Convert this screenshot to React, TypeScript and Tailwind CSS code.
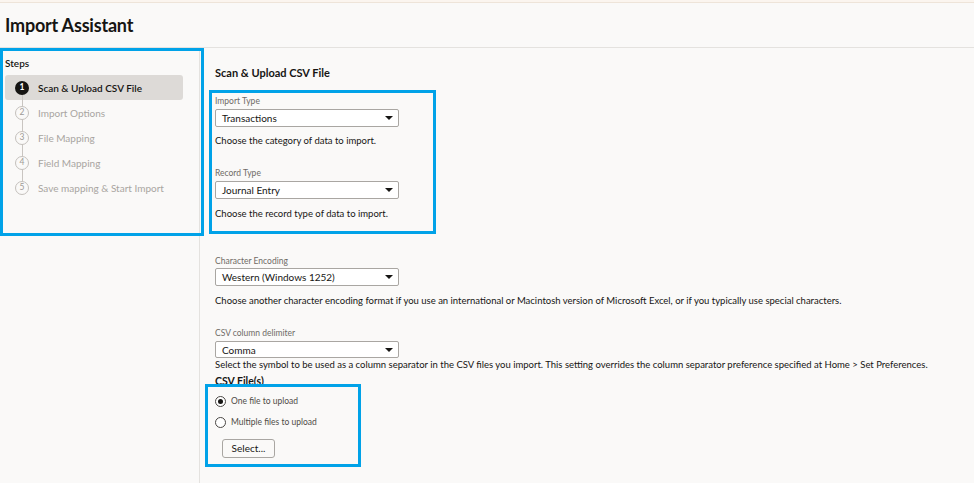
import React from "react";

const steps = [
  "Scan & Upload CSV File",
  "Import Options",
  "File Mapping",
  "Field Mapping",
  "Save mapping & Start Import",
];

function Select({ value, h = "h-[18px]" }: { value: string; h?: string }) {
  return (
    <div
      className={`${h} w-[184px] bg-white border border-[#a9a6a2] rounded-[2px] flex items-center justify-between pl-[6px] pr-[5px]`}
    >
      <span className="text-[10px] leading-none text-[#161513]">{value}</span>
      <span className="w-0 h-0 border-l-[4px] border-r-[4px] border-t-[4px] border-l-transparent border-r-transparent border-t-[#161513]" />
    </div>
  );
}

function Label({ children, className = "" }: { children: React.ReactNode; className?: string }) {
  return <div className={`text-[8.5px] leading-[12px] text-[#6f6b66] ${className}`}>{children}</div>;
}

function Help({ children, className = "" }: { children: React.ReactNode; className?: string }) {
  return <div className={`text-[9.5px] leading-[14px] text-[#161513] ${className}`}>{children}</div>;
}

export default function App() {
  return (
    <div className="w-[974px] h-[483px] overflow-hidden bg-[#faf9f8] text-[#161513] font-['Lato',sans-serif]">
      {/* top strip */}
      <div className="h-[2px] bg-[#fbf5ef]" />
      <div className="h-[1px] bg-[#eee4d9]" />

      {/* header */}
      <div className="h-[45px] flex items-center px-[5px] border-b border-[#e4e2df]">
        <h1 className="text-[18px] font-bold tracking-[-0.2px]">Import Assistant</h1>
      </div>

      <div className="flex h-[436px]">
        {/* sidebar */}
        <div className="relative w-[200px] border-r border-[#e4e2df] pl-[5px]">
          <div className="pt-[9px] text-[10px] leading-[12px] font-semibold">Steps</div>
          <div className="mt-[6px] w-[178px]">
            {steps.map((s, i) => {
              const active = i === 0;
              return (
                <div
                  key={s}
                  className={`relative h-[25px] flex items-center rounded-[3px] ${active ? "bg-[#dddad7]" : ""}`}
                >
                  {i < steps.length - 1 && (
                    <span className="absolute left-[17px] top-[19px] h-[13px] w-px bg-[#c9c5c1]" />
                  )}
                  <span
                    className={`relative ml-[10px] w-[14px] h-[14px] rounded-full flex items-center justify-center text-[8.5px] leading-none ${
                      active
                        ? "bg-[#161513] text-white font-bold"
                        : "bg-[#faf9f8] border border-[#c4c0bc] text-[#9e9a96]"
                    }`}
                  >
                    {i + 1}
                  </span>
                  <span
                    className={`ml-[9px] text-[10px] leading-none ${
                      active ? "font-semibold text-[#161513]" : "text-[#a9a5a1]"
                    }`}
                  >
                    {s}
                  </span>
                </div>
              );
            })}
          </div>
          {/* annotation */}
          <div className="absolute left-0 top-0 w-[204px] h-[188px] border-[3px] border-[#00a2e8] pointer-events-none" />
        </div>

        {/* main */}
        <div className="flex-1 pl-[15px]">
          <div className="mt-[18px] text-[11px] leading-[14px] font-bold">Scan &amp; Upload CSV File</div>

          <div className="relative mt-[10px] pt-[5px] pb-[13px]">
            <Label>Import Type</Label>
            <div className="mt-[2px]">
              <Select value="Transactions" />
            </div>
            <Help className="mt-[7px]">Choose the category of data to import.</Help>
            <Label className="mt-[19px]">Record Type</Label>
            <div className="mt-[2px]">
              <Select value="Journal Entry" />
            </div>
            <Help className="mt-[8px]">Choose the record type of data to import.</Help>
            <div className="absolute -left-[6px] top-0 w-[227px] h-[144px] border-[3px] border-[#00a2e8] pointer-events-none" />
          </div>

          <Label className="mt-[21px]">Character Encoding</Label>
          <div className="mt-[1px]">
            <Select value="Western (Windows 1252)" />
          </div>
          <Help className="mt-[8px]">
            Choose another character encoding format if you use an international or Macintosh version of Microsoft
            Excel, or if you typically use special characters.
          </Help>

          <Label className="mt-[19px]">CSV column delimiter</Label>
          <div className="mt-[2px]">
            <Select value="Comma" h="h-[17px]" />
          </div>
          <Help>
            Select the symbol to be used as a column separator in the CSV files you import. This setting overrides the
            column separator preference specified at Home &gt; Set Preferences.
          </Help>

          <div className="mt-[2px] text-[10.5px] leading-[14px] font-bold">CSV File(s)</div>

          <div className="relative pt-[6px]">
            <label className="flex items-center h-[14px]">
              <span className="w-[11px] h-[11px] rounded-full border border-[#4a4744] bg-white flex items-center justify-center">
                <span className="w-[5px] h-[5px] rounded-full bg-[#161513]" />
              </span>
              <span className="ml-[5px] text-[8.5px] text-[#4f4b47]">One file to upload</span>
            </label>
            <label className="mt-[7px] flex items-center h-[14px]">
              <span className="w-[11px] h-[11px] rounded-full border border-[#4a4744] bg-white" />
              <span className="ml-[5px] text-[8.5px] text-[#4f4b47]">Multiple files to upload</span>
            </label>
            <button className="mt-[10px] ml-[7px] h-[19px] w-[53px] border border-[#a9a6a2] rounded-[3px] bg-[#faf9f8] text-[10px] text-[#161513]">
              Select...
            </button>
            <div className="absolute -left-[10px] -top-[4px] w-[156px] h-[83px] border-[3px] border-[#00a2e8] pointer-events-none" />
          </div>
        </div>
      </div>
    </div>
  );
}
